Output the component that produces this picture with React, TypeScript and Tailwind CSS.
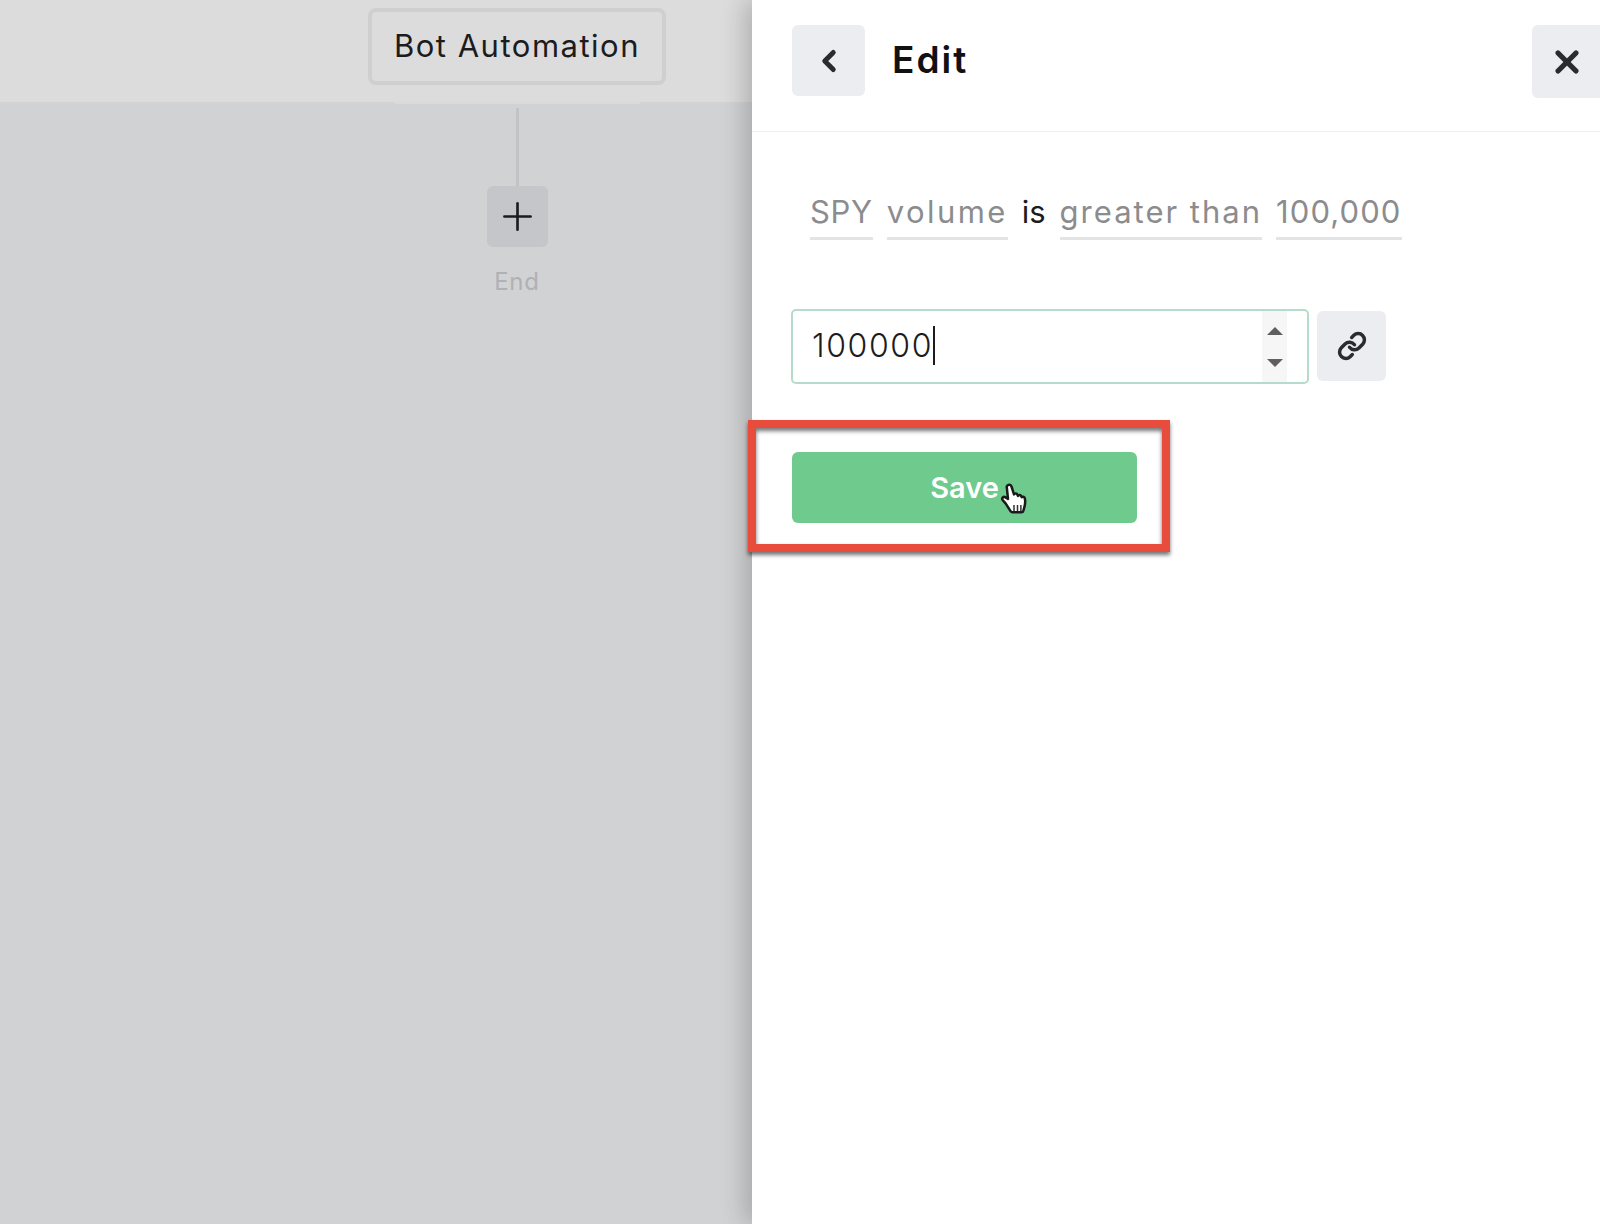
import { ChevronLeft, Link, Plus, X } from 'lucide-react';

const tokens = [
  { text: 'SPY', cls: 'border-b-[3px] border-[#e4e4e6] text-[#8c8c8e] tracking-[0.7px]' },
  { text: 'volume', cls: 'border-b-[3px] border-[#e4e4e6] text-[#8c8c8e] tracking-[2.4px]' },
  { text: 'is', cls: 'text-[#1c1c1e]' },
  { text: 'greater than', cls: 'border-b-[3px] border-[#e4e4e6] text-[#8c8c8e] tracking-[2px]' },
  { text: '100,000', cls: 'border-b-[3px] border-[#e4e4e6] text-[#8c8c8e] tracking-[1.1px]' },
];

function HandCursor() {
  return (
    <svg viewBox="0 0 24 28" className="h-[36px] w-[30px]">
      <path
        d="M7 2.2c1.2-.8 2.5-.2 3 1l2 6.3c.3-1 2.2-1.1 2.7.2l.5 1c.4-.9 2.1-.9 2.6.3l.4.8c.6-.7 2-.5 2.4.7.5 1.800.4 4.500-.2 6.800l-.9 3.300c-.2.800-.8 1.300-1.600 1.300h-7c-.8 0-1.400-.5-1.800-1.200l-3.700-5.800-2.500-2.900c-1-1.300.5-3 2-2.300l2.300 1.400L6.300 4.500c-.3-.9 0-1.800.7-2.300z"
        fill="#fff"
        stroke="#1a1a1a"
        strokeWidth="2"
        strokeLinejoin="round"
      />
      <path d="M12 18v5M14.800 18v5M17.500 18v5" stroke="#333" strokeWidth="1.200" fill="none" />
    </svg>
  );
}

export default function App() {
  return (
    <div className="flex h-[1224px] w-[1600px] overflow-hidden bg-[#d1d2d4] font-['Inter',sans-serif]">
      <div className="flex w-[752px] shrink-0 flex-col">
        <div className="relative h-[104px] shrink-0 border-b-2 border-[#d3d3d4] bg-[#dcdcdc] pl-[368px] pt-[8px]">
          <div className="flex h-[77px] w-[298px] items-center justify-center rounded-lg border-[4px] border-[#cfcfcf] text-[31px] tracking-[1.5px] text-[#1c1c1e]">
            Bot Automation
          </div>
          <div className="absolute -bottom-0.5 left-[395px] h-0.5 w-[245px] bg-[#dadadb]" />
        </div>
        <div className="ml-[368px] flex w-[298px] flex-col items-center pt-[4px]">
          <div className="h-[78px] w-[3px] bg-[#c2c3c6]" />
          <div className="flex h-[61px] w-[61px] items-center justify-center rounded-md bg-[#c5c6ca] text-[#1c1c1e]">
            <Plus size={45} strokeWidth={1.4} />
          </div>
          <span className="mt-[19px] text-[24px] leading-[32px] tracking-[0.8px] text-[#b0b1b4]">End</span>
        </div>
      </div>

      <div className="relative flex min-w-0 flex-1 flex-col bg-white shadow-[-6px_0_24px_rgba(0,0,0,0.22)]">
        <div className="flex h-[132px] shrink-0 items-start justify-between border-b border-[#f0f0f2] pl-10 pt-[25px]">
          <div className="flex items-center gap-[27px]">
            <button className="flex h-[71px] w-[73px] items-center justify-center rounded-md bg-[#ecedf1] text-[#2b2b2e]">
              <ChevronLeft size={34} strokeWidth={3.5} />
            </button>
            <h1 className="-mt-0.5 text-[37px] font-semibold leading-none tracking-[2px] text-[#111113]">Edit</h1>
          </div>
          <button className="flex h-[73px] w-[68px] items-center justify-center rounded-l-md bg-[#ecedf1] pl-0.5 text-[#2b2b2e]">
            <X size={36} strokeWidth={3.5} />
          </button>
        </div>

        <div className="flex gap-[14px] pl-[58px] pt-[55px] text-[31px] leading-[50px]">
          {tokens.map((t) => (
            <span key={t.text} className={t.cls}>
              {t.text}
            </span>
          ))}
        </div>

        <div className="flex items-center gap-[8px] pl-[39px] pt-[69px]">
          <div className="flex h-[75px] w-[518px] items-center justify-between rounded-[5px] border-2 border-[#b5dccb] pl-[19px] pr-[20px]">
            <div className="-mt-0.5 flex items-center text-[32px] font-light tracking-[1.6px] text-[#1c1c1e]">
              100000
              <span className="h-[39px] w-[1.5px] bg-[#1c1c1e]" />
            </div>
            <div className="flex h-full w-[25px] flex-col items-center justify-center gap-[24px] bg-[#f6f6f7] pt-[1px]">
              <span className="h-0 w-0 border-x-[8px] border-b-[8px] border-x-transparent border-b-[#5f5f61]" />
              <span className="h-0 w-0 border-x-[8px] border-t-[8px] border-x-transparent border-t-[#5f5f61]" />
            </div>
          </div>
          <button className="mb-[2px] flex h-[70px] w-[69px] items-center justify-center rounded-md bg-[#ecedf1] text-[#2b2b2e]">
            <Link size={30} strokeWidth={2.8} />
          </button>
        </div>

        <div className="relative ml-10 mt-[68px] w-[345px]">
          <button className="flex h-[71px] w-full items-center justify-center rounded-md bg-[#6fcb8d] text-[29px] font-semibold text-white">
            Save
          </button>
          <div className="absolute left-[207px] top-[30px]">
            <HandCursor />
          </div>
          <div className="absolute -left-11 -top-[32px] h-[132px] w-[422px] border-[8px] border-[#e74c3c] shadow-[0_3px_4px_rgba(0,0,0,0.55),inset_0_3px_4px_rgba(0,0,0,0.55)]" />
        </div>
      </div>
    </div>
  );
}
